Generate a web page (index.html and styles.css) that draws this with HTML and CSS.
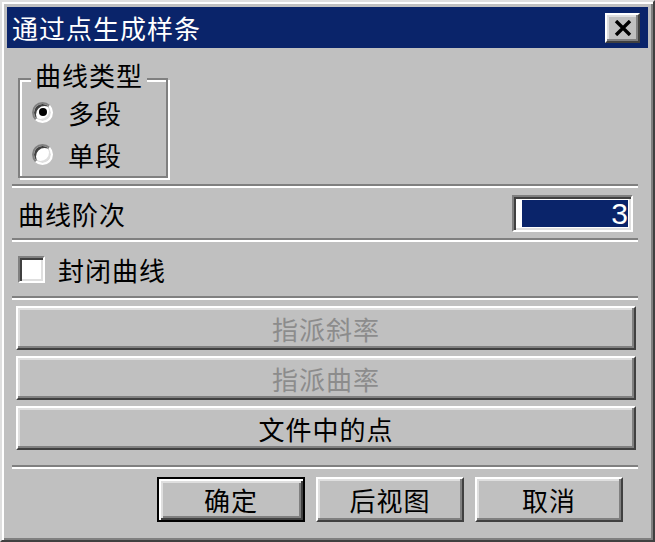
FILE: index.html
```html
<!DOCTYPE html>
<html lang="zh-CN">
<head>
    <meta charset="UTF-8">
    <title>通过点生成样条</title>
    <link rel="stylesheet" href="styles.css">
</head>
<body>
    <div class="window">
        <!-- Title bar -->
        <div class="titlebar">
            <span class="title">通过点生成样条</span>
            <button class="close" type="button">
                <svg width="18" height="16" viewBox="0 0 18 16">
                    <path d="M2 1 L16 15 M16 1 L2 15" stroke="#000" stroke-width="3.4" fill="none"/>
                </svg>
            </button>
        </div>

        <div class="content">
            <!-- Curve type group -->
            <div class="group">
                <span class="group-title">曲线类型</span>
                <div class="option"><span class="radio checked"></span><span>多段</span></div>
                <div class="option"><span class="radio"></span><span>单段</span></div>
            </div>

            <div class="sep first"></div>
            <div class="row degree">
                <span class="label">曲线阶次</span>
                <div class="field"><span class="selected">3</span></div>
            </div>

            <div class="sep"></div>
            <div class="row closed">
                <span class="checkbox"></span>
                <span class="label">封闭曲线</span>
            </div>

            <div class="sep"></div>
            <div class="actions">
                <button class="btn wide" type="button" disabled>指派斜率</button>
                <button class="btn wide" type="button" disabled>指派曲率</button>
                <button class="btn wide" type="button">文件中的点</button>
            </div>

            <div class="sep last"></div>
            <div class="footer">
                <button class="btn default" type="button">确定</button>
                <button class="btn" type="button">后视图</button>
                <button class="btn" type="button">取消</button>
            </div>
        </div>
    </div>
</body>
</html>
```

FILE: styles.css
```css
body, html {
    margin: 0;
    padding: 0;
    background: #c0c0c0;
    font-family: "Noto Sans CJK SC", "Noto Sans", sans-serif;
    font-size: 26px;
    letter-spacing: 1px;
    color: #000;
}
.window {
    box-sizing: border-box;
    width: 655px;
    height: 542px;
    background: #c0c0c0;
    border: 2px solid;
    border-color: #dfdfdf #404040 #404040 #dfdfdf;
    box-shadow: inset 2px 2px #fff, inset -2px -2px #808080;
    padding: 5px;
}
.titlebar {
    height: 41px;
    background: #0a246a;
    color: #fff;
    display: flex;
    align-items: center;
    justify-content: space-between;
    padding: 0 8px 0 5px;
}
.title {
    line-height: 41px;
}
.close {
    box-sizing: border-box;
    width: 35px;
    height: 30px;
    padding: 0;
    background: #c0c0c0;
    border: 2px solid;
    border-color: #fff #404040 #404040 #fff;
    box-shadow: inset -2px -2px #808080, inset 2px 2px #dfdfdf;
    display: flex;
    align-items: center;
    justify-content: center;
}
.content {
    padding: 0 10px 0 5px;
}
.group {
    box-sizing: border-box;
    width: 150px;
    margin: 30px 0 0 6px;
    padding-bottom: 1px;
    border: 2px solid #808080;
    box-shadow: inset 2px 2px #fff, 2px 2px #fff;
}
.group-title {
    display: block;
    width: fit-content;
    margin: -19px 0 0 11px;
    padding: 0 4px;
    background: #c0c0c0;
    line-height: 28px;
}
.option {
    display: flex;
    align-items: center;
    gap: 15px;
    height: 42px;
    padding-left: 12px;
}
.option:first-of-type {
    margin-top: 2px;
}
.radio {
    box-sizing: border-box;
    width: 21px;
    height: 21px;
    border-radius: 50%;
    background: #fff;
    border: 2px solid;
    border-color: #808080 #fff #fff #808080;
    box-shadow: inset 2px 2px #404040, inset -2px -2px #dfdfdf;
    display: flex;
    align-items: center;
    justify-content: center;
}
.radio.checked::after {
    content: "";
    width: 8px;
    height: 8px;
    border-radius: 50%;
    background: #000;
}
.sep {
    height: 2px;
    background: #808080;
    border-bottom: 2px solid #fff;
}
.sep.first {
    margin-top: 6px;
}
.sep.last {
    margin-top: 15px;
}
.row {
    display: flex;
    align-items: center;
}
.degree {
    height: 50px;
    justify-content: space-between;
    padding: 0 5px 0 6px;
}
.field, .checkbox {
    box-sizing: border-box;
    background: #fff;
    border: 2px solid;
    border-color: #808080 #fff #fff #808080;
    box-shadow: inset 2px 2px #404040, inset -2px -2px #dfdfdf;
}
.field {
    width: 121px;
    height: 37px;
    padding: 3px 3px 3px 8px;
    display: flex;
}
.selected {
    flex: 1;
    background: #0a246a;
    color: #fff;
    text-align: right;
    font-family: "Liberation Sans", sans-serif;
    font-size: 30px;
    line-height: 27px;
    letter-spacing: 0;
}
.closed {
    height: 54px;
    gap: 13px;
    padding-left: 6px;
}
.checkbox {
    width: 27px;
    height: 27px;
}
.btn {
    box-sizing: border-box;
    height: 45px;
    padding: 0;
    font: inherit;
    letter-spacing: 1px;
    color: #000;
    background: #c0c0c0;
    border: 2px solid;
    border-color: #fff #404040 #404040 #fff;
    box-shadow: inset -2px -2px #808080, inset 2px 2px #dfdfdf;
}
.btn:disabled {
    color: #8c8c8c;
}
.actions {
    display: flex;
    flex-direction: column;
    gap: 6px;
    margin: 6px 2px 0 4px;
}
.wide {
    height: 44px;
    width: 100%;
}
.footer {
    display: flex;
    justify-content: flex-end;
    gap: 11px;
    margin: 8px 15px 0 0;
}
.footer .btn {
    width: 148px;
}
.btn.default {
    border-color: #000;
    box-shadow: inset 2px 2px #fff, inset -2px -2px #404040, inset 4px 4px #dfdfdf, inset -4px -4px #808080;
}
```
